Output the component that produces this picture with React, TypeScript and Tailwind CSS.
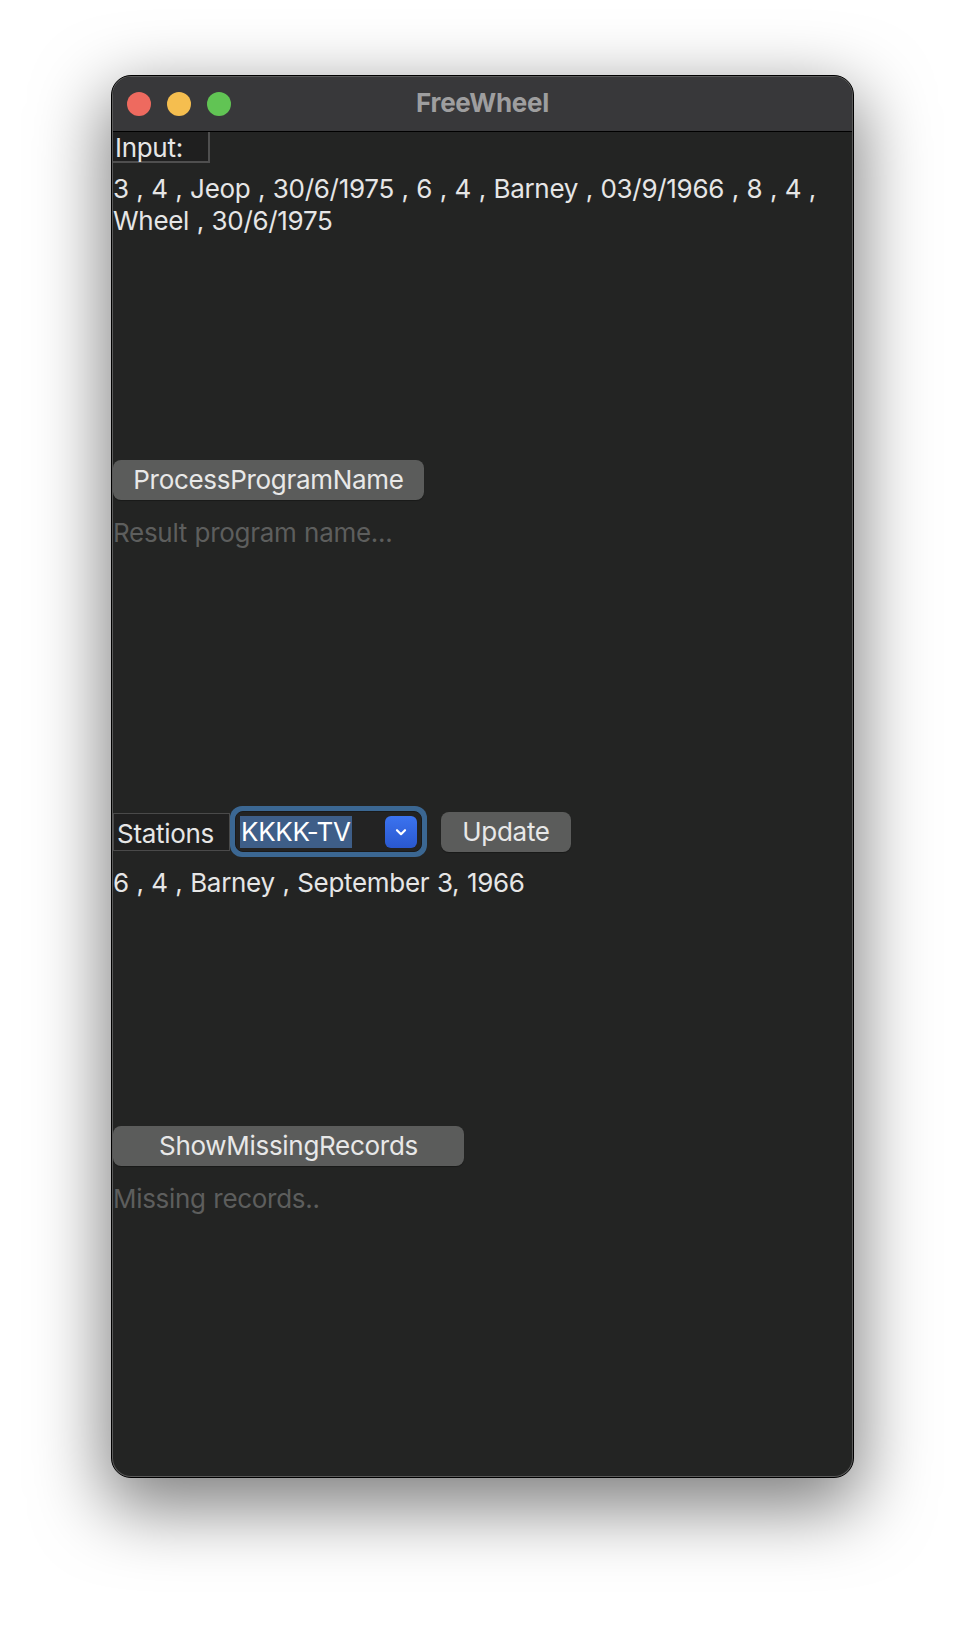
const font = { fontFamily: "Inter, 'Noto Sans', sans-serif" }

const TrafficLights = () => (
  <div className="flex items-center gap-[16px] pl-[14px]">
    <div className="w-[24px] h-[24px] rounded-full bg-[#ee6a5f]" />
    <div className="w-[24px] h-[24px] rounded-full bg-[#f5be4f]" />
    <div className="w-[24px] h-[24px] rounded-full bg-[#61c454]" />
  </div>
)

const GrayButton = ({ label, width }: { label: string; width: string }) => (
  <button
    className={`${width} h-[40px] rounded-[8px] bg-[#5b5c5b] text-[#e8e8e8] text-[26px] tracking-[-0.3px] leading-[40px] text-center shadow-[0_1px_1px_rgba(0,0,0,0.3)]`}
  >
    {label}
  </button>
)

const StationSelect = () => (
  <div className="w-[197px] h-[51px] rounded-[12px] bg-[#3b6792] p-[5px]">
    <div className="w-full h-full rounded-[8px] bg-[#232323] border border-[#1a1a1a] flex items-center justify-between pl-[4px] pr-[4px]">
      <span className="bg-[#3e5e88] text-white text-[26px] leading-[32px] px-[1px]">KKKK-TV</span>
      <div className="w-[32px] h-[32px] rounded-[6px] bg-gradient-to-b from-[#3b73f0] to-[#2a58cf] flex items-center justify-center">
        <svg width="14" height="10" viewBox="0 0 14 10" fill="none">
          <path d="M3 3.2 L7 7.2 L11 3.2" stroke="white" strokeWidth="2.2" strokeLinecap="round" strokeLinejoin="round" />
        </svg>
      </div>
    </div>
  </div>
)

const App = () => {
  return (
    <div className="min-h-[1626px] bg-white pt-[75px] pl-[111px]" style={font}>
      <div className="w-[743px] h-[1403px] rounded-[20px] bg-[#5a5a5a] border border-black p-[1px] shadow-[0_24px_70px_6px_rgba(0,0,0,0.5)]">
        <div className="w-full h-full rounded-[18px] overflow-hidden bg-[#232423] flex flex-col">
          {/* title bar */}
          <div className="h-[55px] bg-[#38383a] border-b border-black grid grid-cols-[1fr_auto_1fr] items-center shrink-0">
            <TrafficLights />
            <div className="text-[26px] font-bold text-[#9e9e9f] tracking-[-0.3px] pb-[3px]">FreeWheel</div>
            <div />
          </div>

          {/* content */}
          <div className="flex flex-col text-[#e6e6e6] text-[26px] tracking-[-0.3px] [word-spacing:0.6px]">
            <div className="w-[97px] h-[31px] bg-[#1f1f1f] border-r-2 border-b-2 border-[#4f4f4f] leading-[31px] pl-[2px]">
              Input:
            </div>
            <div className="h-[297px] pt-[10px] leading-[32px] pr-[18px]">
              3 , 4 , Jeop , 30/6/1975 , 6 , 4 , Barney , 03/9/1966 , 8 , 4 , Wheel , 30/6/1975
            </div>

            <GrayButton label="ProcessProgramName" width="w-[311px]" />

            <div className="h-[306px] pt-[17px] leading-[32px] text-[#5d5e5d]">Result program name...</div>

            <div className="h-[51px] flex items-center">
              <div className="w-[117px] h-[38px] border border-[#4a4a4a] bg-[#202020] leading-[40px] pl-[3px]">
                Stations
              </div>
              <StationSelect />
              <div className="ml-[14px]">
                <GrayButton label="Update" width="w-[130px]" />
              </div>
            </div>

            <div className="h-[269px] pt-[10px] leading-[32px]">6 , 4 , Barney , September 3, 1966</div>

            <GrayButton label="ShowMissingRecords" width="w-[351px]" />

            <div className="pt-[17px] leading-[32px] text-[#5d5e5d]">Missing records..</div>
          </div>
        </div>
      </div>
    </div>
  )
}

export default App
